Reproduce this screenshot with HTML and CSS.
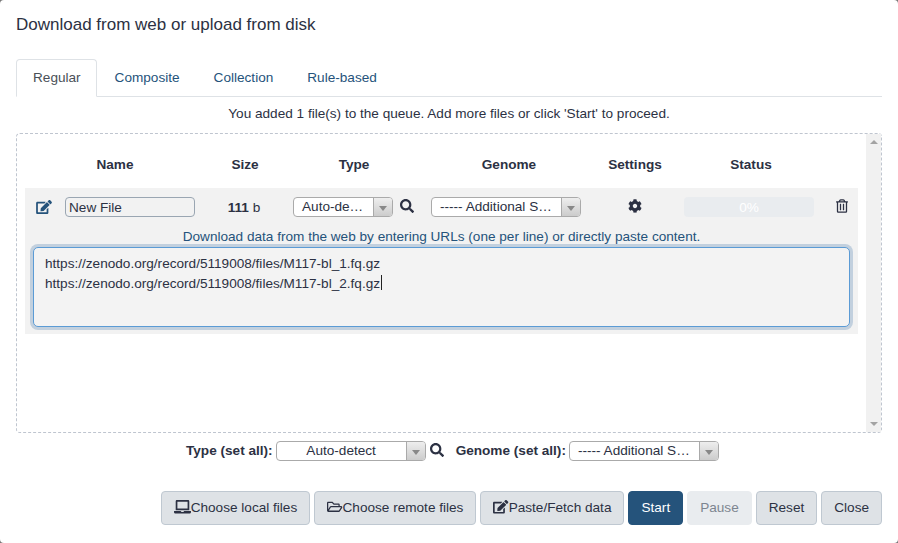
FILE: index.html
```html
<!DOCTYPE html>
<html lang="en">
<head>
    <meta charset="UTF-8">
    <title>Download from web or upload from disk</title>
    <link rel="stylesheet" href="styles.css">
</head>
<body>
    <div class="modal">
        <h4 class="modal-title">Download from web or upload from disk</h4>

        <ul class="tabs">
            <li class="tab active">Regular</li>
            <li class="tab">Composite</li>
            <li class="tab">Collection</li>
            <li class="tab">Rule-based</li>
        </ul>

        <p class="message">You added 1 file(s) to the queue. Add more files or click 'Start' to proceed.</p>

        <!-- Queue -->
        <div class="upload-box">
            <div class="queue">
                <div class="queue-head">
                    <div class="head-name">Name</div>
                    <div class="head-size">Size</div>
                    <div class="head-type">Type</div>
                    <div class="head-genome">Genome</div>
                    <div class="head-settings">Settings</div>
                    <div class="head-status">Status</div>
                </div>

                <div class="queue-row">
                    <div class="row-fields">
                        <svg class="icon icon-edit" viewBox="0 0 576 512"><path d="M402.6 83.2l90.2 90.2c3.8 3.8 3.8 10 0 13.8L274.4 405.6l-92.8 10.3c-12.4 1.4-22.9-9.1-21.5-21.5l10.3-92.8L388.8 83.2c3.8-3.8 10-3.8 13.8 0zm162-22.9l-48.8-48.8c-15.2-15.2-39.9-15.2-55.2 0l-35.4 35.4c-3.8 3.8-3.8 10 0 13.8l90.2 90.2c3.8 3.8 10 3.8 13.8 0l35.4-35.4c15.2-15.3 15.2-40 0-55.2zM384 346.2V448H64V128h229.8c3.2 0 6.2-1.3 8.5-3.5l40-40c7.6-7.6 2.2-20.5-8.5-20.5H48C21.5 64 0 85.5 0 112v352c0 26.5 21.5 48 48 48h352c26.5 0 48-21.5 48-48V306.2c0-10.7-12.9-16-20.5-8.5l-40 40c-2.2 2.3-3.5 5.3-3.5 8.5z"/></svg>
                        <div class="name-input">New File</div>
                        <div class="size"><b>111</b> b</div>
                        <div class="select type-select">
                            <span class="select-text">Auto-de…</span>
                            <span class="select-arrow"></span>
                        </div>
                        <svg class="icon icon-search" viewBox="0 0 512 512"><path d="M505 442.7L405.3 343c-4.5-4.5-10.6-7-17-7H372c27.6-35.3 44-79.7 44-128C416 93.1 322.9 0 208 0S0 93.1 0 208s93.1 208 208 208c48.3 0 92.7-16.4 128-44v16.3c0 6.4 2.5 12.5 7 17l99.7 99.7c9.4 9.4 24.6 9.4 33.9 0l28.3-28.3c9.4-9.4 9.4-24.6.1-34zM208 336c-70.7 0-128-57.2-128-128 0-70.7 57.2-128 128-128 70.7 0 128 57.2 128 128 0 70.7-57.2 128-128 128z"/></svg>
                        <div class="select genome-select">
                            <span class="select-text">----- Additional S…</span>
                            <span class="select-arrow"></span>
                        </div>
                        <svg class="icon icon-cog" viewBox="0 0 512 512"><path d="M487.4 315.7l-42.6-24.6c4.3-23.2 4.3-47 0-70.2l42.6-24.6c4.9-2.8 7.1-8.6 5.5-14-11.1-35.6-30-67.8-54.7-94.6-3.8-4.1-10-5.1-14.8-2.3L380.8 110c-17.9-15.4-38.5-27.3-60.8-35.1V25.8c0-5.6-3.9-10.5-9.4-11.7-36.7-8.2-74.3-7.8-109.2 0-5.5 1.2-9.4 6.1-9.4 11.7V75c-22.2 7.9-42.8 19.8-60.8 35.1L88.7 85.5c-4.9-2.8-11-1.9-14.8 2.3-24.7 26.7-43.6 58.9-54.7 94.6-1.7 5.4.6 11.2 5.5 14L67.3 221c-4.3 23.2-4.3 47 0 70.2l-42.6 24.6c-4.9 2.8-7.1 8.6-5.5 14 11.1 35.6 30 67.8 54.7 94.6 3.8 4.1 10 5.1 14.8 2.3l42.6-24.6c17.9 15.4 38.5 27.3 60.8 35.1v49.2c0 5.6 3.9 10.5 9.4 11.7 36.7 8.2 74.3 7.8 109.2 0 5.5-1.2 9.4-6.1 9.4-11.7v-49.2c22.2-7.9 42.8-19.8 60.8-35.1l42.6 24.6c4.9 2.8 11 1.9 14.8-2.3 24.7-26.7 43.6-58.9 54.7-94.6 1.5-5.5-.7-11.3-5.6-14.1zM256 336c-44.1 0-80-35.9-80-80s35.9-80 80-80 80 35.9 80 80-35.9 80-80 80z"/></svg>
                        <div class="progress">0%</div>
                        <svg class="icon icon-trash" viewBox="0 0 448 512"><path d="M268 416h24a12 12 0 0 0 12-12V188a12 12 0 0 0-12-12h-24a12 12 0 0 0-12 12v216a12 12 0 0 0 12 12zM432 80h-82.41l-34-56.7A48 48 0 0 0 274.41 0H173.59a48 48 0 0 0-41.16 23.3L98.41 80H16A16 16 0 0 0 0 96v16a16 16 0 0 0 16 16h16v336a48 48 0 0 0 48 48h288a48 48 0 0 0 48-48V128h16a16 16 0 0 0 16-16V96a16 16 0 0 0-16-16zM171.84 50.91A6 6 0 0 1 177 48h94a6 6 0 0 1 5.15 2.91L293.61 80H154.39zM368 464H80V128h288zm-212-48h24a12 12 0 0 0 12-12V188a12 12 0 0 0-12-12h-24a12 12 0 0 0-12 12v216a12 12 0 0 0 12 12z"/></svg>
                    </div>
                    <div class="row-hint">Download data from the web by entering URLs (one per line) or directly paste content.</div>
                    <div class="url-box">
                        <div>https://zenodo.org/record/5119008/files/M117-bl_1.fq.gz</div>
                        <div>https://zenodo.org/record/5119008/files/M117-bl_2.fq.gz<span class="caret"></span></div>
                    </div>
                </div>
            </div>
            <div class="scrollbar">
                <span class="scroll-up"></span>
                <span class="scroll-down"></span>
            </div>
        </div>

        <!-- Set all -->
        <div class="set-all">
            <b>Type (set all):</b>
            <div class="select all-type">
                <span class="select-text">Auto-detect</span>
                <span class="select-arrow"></span>
            </div>
            <svg class="icon icon-search" viewBox="0 0 512 512"><path d="M505 442.7L405.3 343c-4.5-4.5-10.6-7-17-7H372c27.6-35.3 44-79.7 44-128C416 93.1 322.9 0 208 0S0 93.1 0 208s93.1 208 208 208c48.3 0 92.7-16.4 128-44v16.3c0 6.4 2.5 12.5 7 17l99.7 99.7c9.4 9.4 24.6 9.4 33.9 0l28.3-28.3c9.4-9.4 9.4-24.6.1-34zM208 336c-70.7 0-128-57.2-128-128 0-70.7 57.2-128 128-128 70.7 0 128 57.2 128 128 0 70.7-57.2 128-128 128z"/></svg>
            <b class="genome-label">Genome (set all):</b>
            <div class="select genome-select">
                <span class="select-text">----- Additional S…</span>
                <span class="select-arrow"></span>
            </div>
        </div>

        <!-- Buttons -->
        <div class="buttons">
            <button class="btn"><svg class="btn-icon" viewBox="0 0 640 512"><path d="M624 416H381.54c-.74 19.81-14.71 32-32.74 32H288c-18.69 0-33.02-17.47-32.77-32H16c-8.8 0-16 7.2-16 16v16c0 35.2 28.8 64 64 64h512c35.2 0 64-28.8 64-64v-16c0-8.8-7.2-16-16-16zM576 48c0-26.4-21.6-48-48-48H112C85.6 0 64 21.6 64 48v336h512V48zm-64 272H128V64h384v256z"/></svg>Choose local files</button>
            <button class="btn"><svg class="btn-icon" viewBox="0 0 576 512"><path d="M527.9 224H480v-48c0-26.5-21.5-48-48-48H272l-64-64H48C21.5 64 0 85.5 0 112v288c0 26.5 21.5 48 48 48h400c16.5 0 31.9-8.5 40.7-22.6l79.9-128c20-31.9-3-73.4-40.7-73.4zM48 118c0-3.3 2.7-6 6-6h134.1l64 64H426c3.3 0 6 2.7 6 6v42H152c-16.8 0-32.4 8.8-41.1 23.2L48 351.4zm400 282H72l77.2-128H528z"/></svg>Choose remote files</button>
            <button class="btn"><svg class="btn-icon" viewBox="0 0 576 512"><path d="M402.6 83.2l90.2 90.2c3.8 3.8 3.8 10 0 13.8L274.4 405.6l-92.8 10.3c-12.4 1.4-22.9-9.1-21.5-21.5l10.3-92.8L388.8 83.2c3.8-3.8 10-3.8 13.8 0zm162-22.9l-48.8-48.8c-15.2-15.2-39.9-15.2-55.2 0l-35.4 35.4c-3.8 3.8-3.8 10 0 13.8l90.2 90.2c3.8 3.8 10 3.8 13.8 0l35.4-35.4c15.2-15.3 15.2-40 0-55.2zM384 346.2V448H64V128h229.8c3.2 0 6.2-1.3 8.5-3.5l40-40c7.6-7.6 2.2-20.5-8.5-20.5H48C21.5 64 0 85.5 0 112v352c0 26.5 21.5 48 48 48h352c26.5 0 48-21.5 48-48V306.2c0-10.7-12.9-16-20.5-8.5l-40 40c-2.2 2.3-3.5 5.3-3.5 8.5z"/></svg>Paste/Fetch data</button>
            <button class="btn btn-primary">Start</button>
            <button class="btn btn-disabled">Pause</button>
            <button class="btn">Reset</button>
            <button class="btn">Close</button>
        </div>
    </div>
</body>
</html>
```

FILE: styles.css
```css
/* Page */
body {
    margin: 0;
    background-color: #777;
    font-family: "Liberation Sans", Arial, sans-serif;
    font-size: 13.6px;
    color: #2c3143;
}

.modal {
    width: 898px;
    height: 543px;
    box-sizing: border-box;
    padding: 0 16px;
    background-color: #fff;
    border-radius: 4px;
    overflow: hidden;
}

.modal-title {
    margin: 0;
    padding-top: 15px;
    height: 44px;
    box-sizing: border-box;
    font-size: 17px;
    line-height: 19px;
    font-weight: 400;
}

/* Tabs */
.tabs {
    display: flex;
    margin: 15px 0 0;
    padding: 0;
    height: 38px;
    box-sizing: border-box;
    list-style: none;
    border-bottom: 1px solid #dee2e6;
}

.tab {
    padding: 9px 16px 0;
    height: 38px;
    box-sizing: border-box;
    color: #25537b;
    border: 1px solid transparent;
    border-radius: 4px 4px 0 0;
    line-height: 17px;
}

.tab.active {
    padding-right: 15px;
    margin-right: 1px;
    color: #495057;
    background-color: #fff;
    border-color: #dee2e6 #dee2e6 #fff;
}

.message {
    margin: 0;
    height: 36px;
    padding-top: 9px;
    box-sizing: border-box;
    text-align: center;
    line-height: 16px;
}

/* Queue box */
.upload-box {
    display: flex;
    height: 300px;
    box-sizing: border-box;
    border: 1px dashed #bfc5cf;
    border-radius: 4px;
}

.queue {
    flex: 1;
    padding: 0 8px;
}

.queue-head {
    display: flex;
    height: 54px;
    align-items: center;
    font-weight: 700;
    text-align: center;
    padding-top: 6px;
    box-sizing: border-box;
}

.head-name { width: 180px; }
.head-size { width: 80px; }
.head-type { width: 138px; }
.head-genome { width: 172px; }
.head-settings { width: 80px; }
.head-status { width: 152px; }

.queue-row {
    background-color: #f2f2f2;
    height: 146px;
}

.row-fields {
    display: flex;
    align-items: center;
    height: 38px;
    box-sizing: border-box;
}

.icon {
    fill: #2c3143;
    flex: none;
}

.icon-edit {
    width: 16px;
    height: 14px;
    margin: 0 13px 0 11px;
    fill: #25537b;
}

.icon-search {
    width: 14px;
    height: 14px;
    margin: -2px 0 0 7px;
}

.icon-cog {
    width: 14px;
    height: 14px;
    margin: -2px 0 0 47px;
}

.icon-trash {
    width: 12px;
    height: 14px;
    margin: -2px 0 0 22px;
}

.name-input {
    width: 130px;
    height: 20px;
    box-sizing: border-box;
    border: 1px solid #9aa6b2;
    border-radius: 4px;
    padding-left: 3px;
    line-height: 20px;
}

.size {
    width: 98px;
    text-align: center;
}

/* Select boxes */
.select {
    display: flex;
    height: 20px;
    box-sizing: border-box;
    background-color: #fff;
    border: 1px solid #aaa;
    border-radius: 4px;
    line-height: 17px;
    overflow: hidden;
    flex: none;
}

.select-text {
    flex: 1;
    min-width: 0;
    padding-left: 8px;
    white-space: nowrap;
}

.select-arrow {
    display: flex;
    align-items: center;
    justify-content: center;
    width: 18px;
    flex: none;
    border-left: 1px solid #aaa;
    background: linear-gradient(#eee, #ccc);
}

.select-arrow::after {
    content: "";
    margin-top: 2px;
    border: 4px solid transparent;
    border-top: 5px solid #888;
    border-bottom: 0;
}

.type-select { width: 100px; }
.genome-select { width: 150px; margin-left: 17px; }
.all-type { width: 150px; margin-left: 3px; }
.all-type .select-text { text-align: center; padding-left: 0; }

.progress {
    width: 130px;
    height: 20px;
    margin-left: 42px;
    border-radius: 4px;
    background-color: #e9ecef;
    color: #fff;
    text-align: center;
    line-height: 21px;
}

.row-hint {
    height: 21px;
    padding-top: 3px;
    box-sizing: border-box;
    color: #25537b;
    text-align: center;
    line-height: 16px;
}

.url-box {
    height: 80px;
    margin: 0 8px;
    padding: 6px 11px;
    box-sizing: border-box;
    border: 1px solid #5b9bd5;
    border-radius: 5px;
    box-shadow: 0 0 0 3px #c2d0de;
    line-height: 20px;
    background-color: #f3f3f3;
}

.caret {
    display: inline-block;
    height: 15px;
    margin-left: 1px;
    vertical-align: -2px;
    border-left: 1px solid #222;
}

/* Fake scrollbar */
.scrollbar {
    display: flex;
    flex-direction: column;
    justify-content: space-between;
    align-items: center;
    width: 15px;
    padding: 6px 0;
    box-sizing: border-box;
    background-color: #f1f1f1;
}

.scroll-up {
    border: 4px solid transparent;
    border-bottom: 4px solid #a3a3a3;
    border-top: 0;
}

.scroll-down {
    border: 4px solid transparent;
    border-top: 4px solid #a3a3a3;
    border-bottom: 0;
}

/* Set all row */
.set-all {
    display: flex;
    align-items: center;
    height: 20px;
    margin-top: 8px;
    padding-left: 170px;
}

.set-all b {
    padding-bottom: 1px;
}

.set-all .icon-search {
    margin-left: 4px;
}

.genome-label {
    margin-left: 12px;
}

.set-all .genome-select {
    margin-left: 3px;
}

/* Buttons */
.buttons {
    display: flex;
    justify-content: flex-end;
    gap: 4px;
    margin-top: 30px;
}

.btn {
    display: flex;
    align-items: center;
    height: 34px;
    padding: 0 12px 2px;
    font-family: inherit;
    font-size: inherit;
    color: #2c3143;
    background-color: #dee2e6;
    border: 1px solid #bfc8d1;
    border-radius: 4px;
}

.btn-icon {
    height: 13.6px;
    fill: #2c3143;
    flex: none;
}

.btn-primary {
    color: #fff;
    background-color: #25537b;
    border-color: #25537b;
}

.btn-disabled {
    color: #7d8590;
    background-color: #e9ecef;
    border-color: #e9ecef;
}
```
